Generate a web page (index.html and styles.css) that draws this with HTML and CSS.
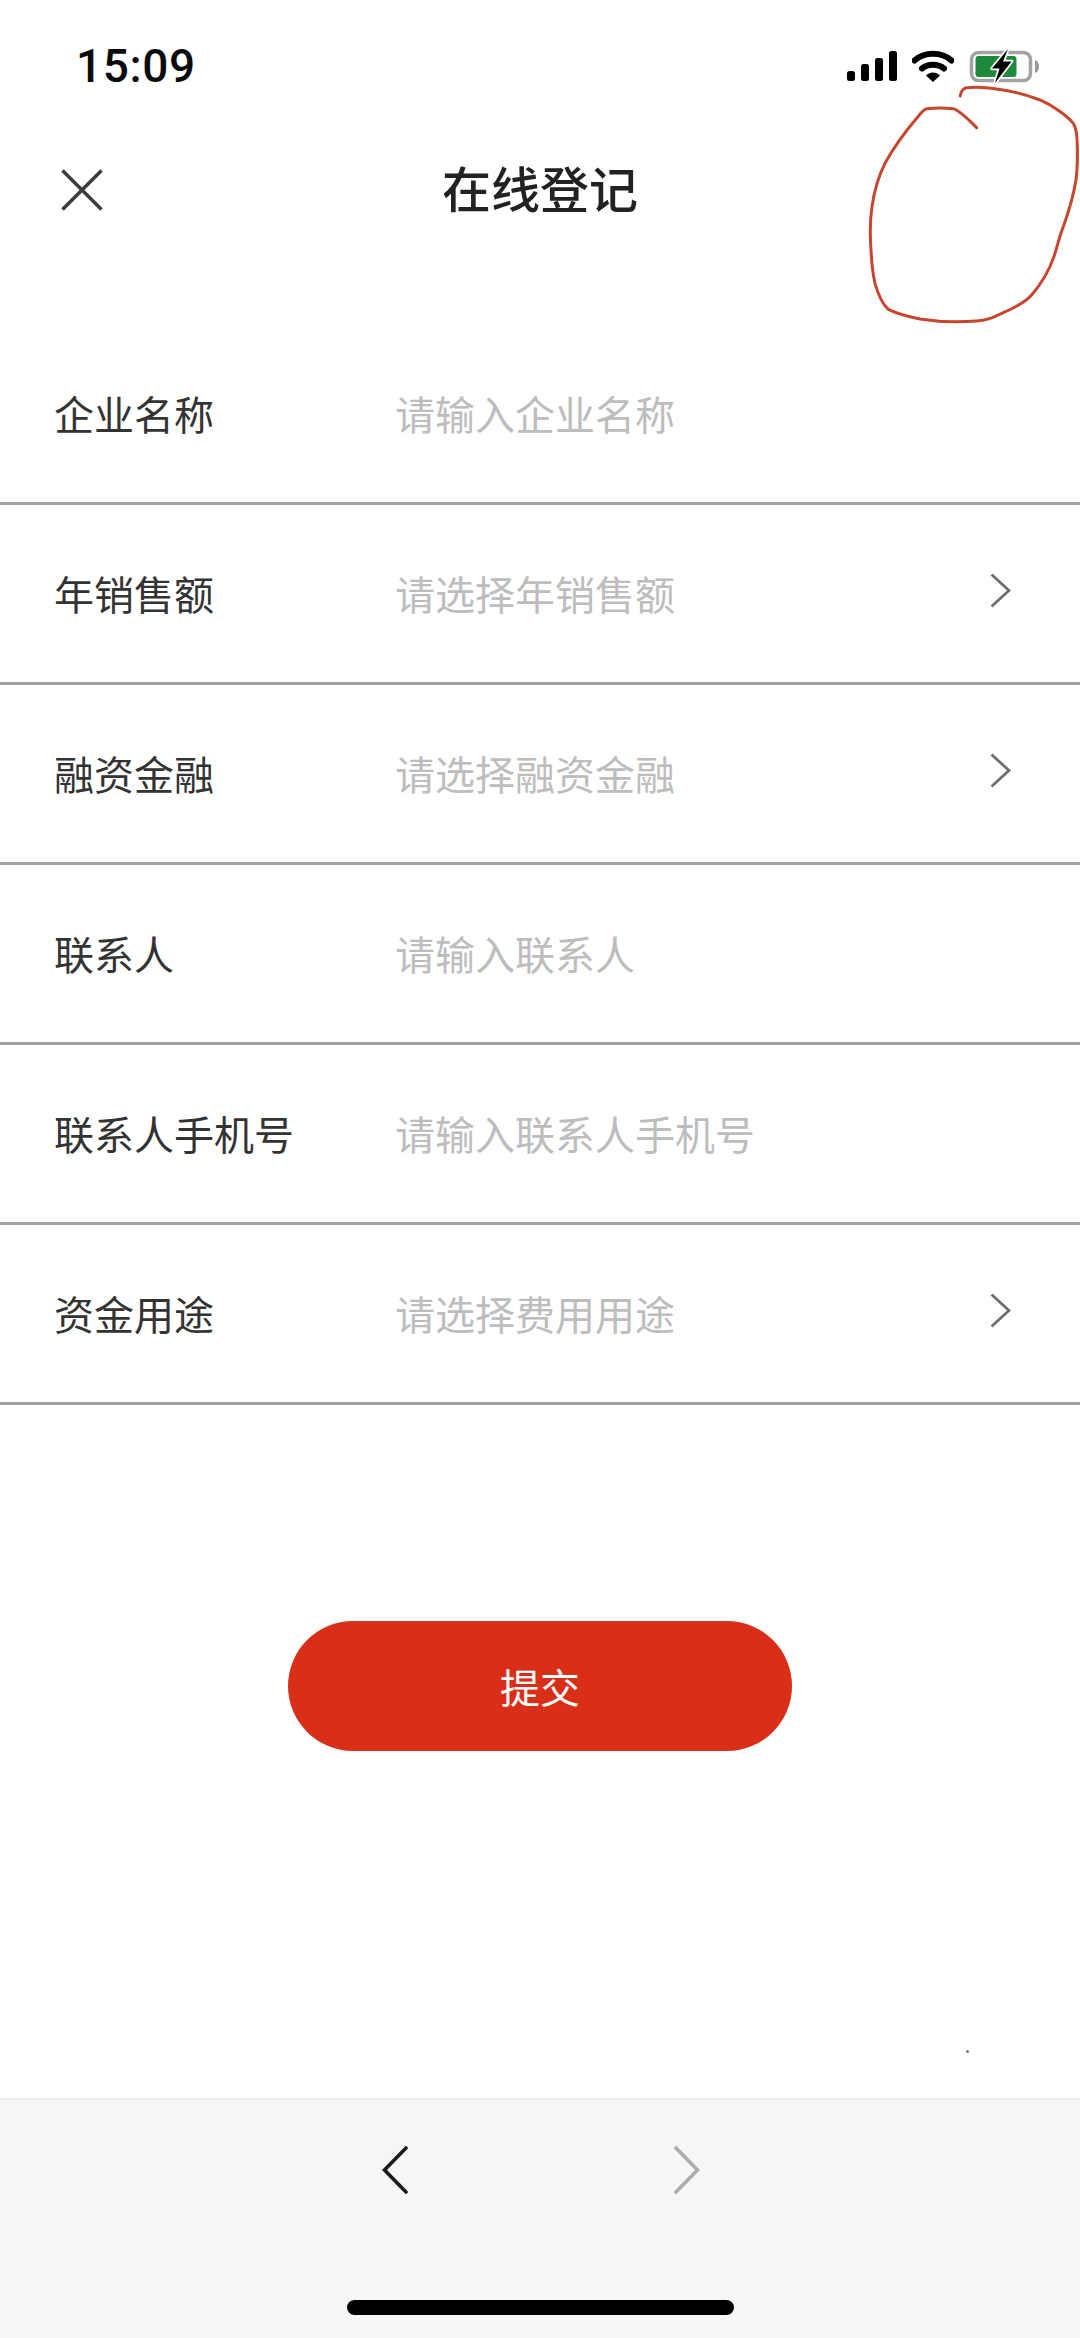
FILE: index.html
```html
<!DOCTYPE html>
<html lang="en">
<head>
    <meta charset="UTF-8">
    <meta name="viewport" content="width=device-width, initial-scale=1.0">
    <title>在线登记</title>
    <link rel="stylesheet" href="styles.css">
</head>
<body>
    <div class="page">
        <div class="status-bar">
            <span class="time">15:09</span>
            <div class="status-icons">
                <svg class="signal" width="50" height="30" viewBox="0 0 50 30">
                    <rect x="0" y="20" width="8" height="10" rx="2.5"/>
                    <rect x="14" y="13" width="8" height="17" rx="2.5"/>
                    <rect x="28" y="7" width="8" height="23" rx="2.5"/>
                    <rect x="42" y="0" width="8" height="30" rx="2.5"/>
                </svg>
                <svg class="wifi" width="42" height="32" viewBox="0 0 42 32">
                    <path d="M2.5 10.5C12.5 1.5 29.5 1.5 39.5 10.5" fill="none" stroke="#000" stroke-width="6" stroke-linecap="round"/>
                    <path d="M10 18.5C15.5 13.5 26.5 13.5 32 18.5" fill="none" stroke="#000" stroke-width="6" stroke-linecap="round"/>
                    <path d="M14 25.5C18 21.5 24 21.5 28 25.5L21 32Z"/>
                </svg>
                <svg class="battery" width="70" height="36" viewBox="0 0 70 36">
                    <rect x="2.5" y="4.5" width="59" height="28" rx="7" fill="none" stroke="#a3a3a3" stroke-width="3.5"/>
                    <rect x="6.5" y="8" width="41" height="21" rx="3" fill="#1f8a3c"/>
                    <path d="M66 12C69 13 70 15.5 70 18.5C70 21.5 69 24 66 25Z" fill="#9a9a9a"/>
                    <path d="M39 1L23 20.5H30.5L26 35L42.5 13.5H34Z" fill="#000" stroke="#fff" stroke-width="3.5" stroke-linejoin="round" paint-order="stroke"/>
                </svg>
            </div>
        </div>

        <div class="nav-bar">
            <svg class="close" width="42" height="42" viewBox="0 0 42 42">
                <path d="M1.5 1.5L40.5 40.5M40.5 1.5L1.5 40.5" stroke="#3c3c3c" stroke-width="3.5" fill="none"/>
            </svg>
            <h1 class="nav-title">在线登记</h1>
        </div>

        <div class="form-list">
            <div class="form-row">
                <span class="row-label">企业名称</span>
                <span class="row-hint">请输入企业名称</span>
            </div>
            <div class="form-row">
                <span class="row-label">年销售额</span>
                <span class="row-hint">请选择年销售额</span>
                <svg class="row-arrow" width="21" height="35" viewBox="0 0 21 35"><path d="M1.5 1.5L19 17.5L1.5 33.5" fill="none" stroke="#6e6e6e" stroke-width="2.8"/></svg>
            </div>
            <div class="form-row">
                <span class="row-label">融资金融</span>
                <span class="row-hint">请选择融资金融</span>
                <svg class="row-arrow" width="21" height="35" viewBox="0 0 21 35"><path d="M1.5 1.5L19 17.5L1.5 33.5" fill="none" stroke="#6e6e6e" stroke-width="2.8"/></svg>
            </div>
            <div class="form-row">
                <span class="row-label">联系人</span>
                <span class="row-hint">请输入联系人</span>
            </div>
            <div class="form-row">
                <span class="row-label">联系人手机号</span>
                <span class="row-hint">请输入联系人手机号</span>
            </div>
            <div class="form-row">
                <span class="row-label">资金用途</span>
                <span class="row-hint">请选择费用用途</span>
                <svg class="row-arrow" width="21" height="35" viewBox="0 0 21 35"><path d="M1.5 1.5L19 17.5L1.5 33.5" fill="none" stroke="#6e6e6e" stroke-width="2.8"/></svg>
            </div>
        </div>

        <button class="submit-btn">提交</button>

        <div class="bottom-bar">
            <div class="browser-nav">
                <svg width="26" height="48" viewBox="0 0 26 48"><path d="M24 2L2.5 24L24 46" fill="none" stroke="#1c1c1c" stroke-width="3.6" stroke-linecap="round"/></svg>
                <svg width="26" height="48" viewBox="0 0 26 48"><path d="M2 2L23.5 24L2 46" fill="none" stroke="#acacac" stroke-width="3.6" stroke-linecap="round"/></svg>
            </div>
            <div class="home-indicator"></div>
        </div>

        <!-- red marker circle drawn on top of the screenshot -->
        <svg class="scribble" width="1080" height="340" viewBox="0 0 1080 340">
            <path transform="translate(780 20) scale(0.3333)" d="M541 228C542 215 546 206 560 203C590 201 620 202 650 207C700 214 745 226 780 240C815 255 860 285 880 310C890 325 892 345 892 380C893 420 892 450 888 480C880 530 868 570 850 620C838 650 832 680 822 710C810 745 785 790 755 825C735 848 700 865 670 878C640 892 620 902 590 903C540 907 470 905 420 897C385 890 350 880 325 868C310 855 295 825 285 790C278 760 275 730 273 690C270 650 270 600 276 560C283 510 295 470 315 430C340 385 380 330 410 295C420 282 430 268 440 266C465 264 495 264 520 266C540 272 565 298 590 323" fill="none" stroke="#c8452f" stroke-width="9" stroke-linecap="round" stroke-linejoin="round"/>
        </svg>
        <div class="speck"></div>
    </div>
</body>
</html>
```

FILE: styles.css
```css
* {
    box-sizing: border-box;
}
body {
    margin: 0;
    background: #fff;
    font-family: "Noto Sans CJK SC", "Noto Sans", sans-serif;
}
.page {
    position: relative;
    width: 1080px;
    height: 2338px;
    display: flex;
    flex-direction: column;
    overflow: hidden;
}
.status-bar {
    height: 132px;
    display: flex;
    align-items: center;
    justify-content: space-between;
    padding: 0 41px 0 76px;
}
.time {
    font-family: Roboto, "Liberation Sans", sans-serif;
    font-size: 46px;
    font-weight: 500;
    letter-spacing: 0.6px;
    color: #0c0c0c;
}
.status-icons {
    display: flex;
    align-items: center;
    gap: 15px;
}
.nav-bar {
    position: relative;
    height: 116px;
    margin-bottom: 77px;
    padding-bottom: 8px;
    display: flex;
    align-items: center;
    justify-content: center;
}
.close {
    position: absolute;
    left: 61px;
    top: 37px;
}
.nav-title {
    margin: 0;
    font-size: 49px;
    font-weight: 500;
    color: #222;
}
.form-row {
    height: 180px;
    display: flex;
    align-items: center;
    padding: 0 69px 2px 54px;
    border-bottom: 3px solid #a2a2a2;
    font-size: 40px;
}
.row-label {
    width: 341px;
    color: #333;
}
.row-hint {
    color: #bdbdbd;
}
.row-arrow {
    margin-left: auto;
    margin-top: -4px;
}
.submit-btn {
    width: 504px;
    height: 130px;
    margin: 216px 0 0 288px;
    border: none;
    border-radius: 65px;
    background-color: #d92f19;
    color: #fff;
    font-family: inherit;
    font-size: 40px;
}
.bottom-bar {
    margin-top: auto;
    height: 240px;
    background: #f6f6f6;
    border-top: 2px solid #ececec;
    padding-top: 46px;
}
.browser-nav {
    display: flex;
    gap: 266px;
    padding-left: 382px;
}
.home-indicator {
    width: 387px;
    height: 15px;
    margin: 106px 0 0 347px;
    border-radius: 8px;
    background: #000;
}
.scribble {
    position: absolute;
    left: 0;
    top: 0;
    pointer-events: none;
}
.speck {
    position: absolute;
    left: 966px;
    top: 2050px;
    width: 3px;
    height: 3px;
    border-radius: 50%;
    background: #777;
}
```
